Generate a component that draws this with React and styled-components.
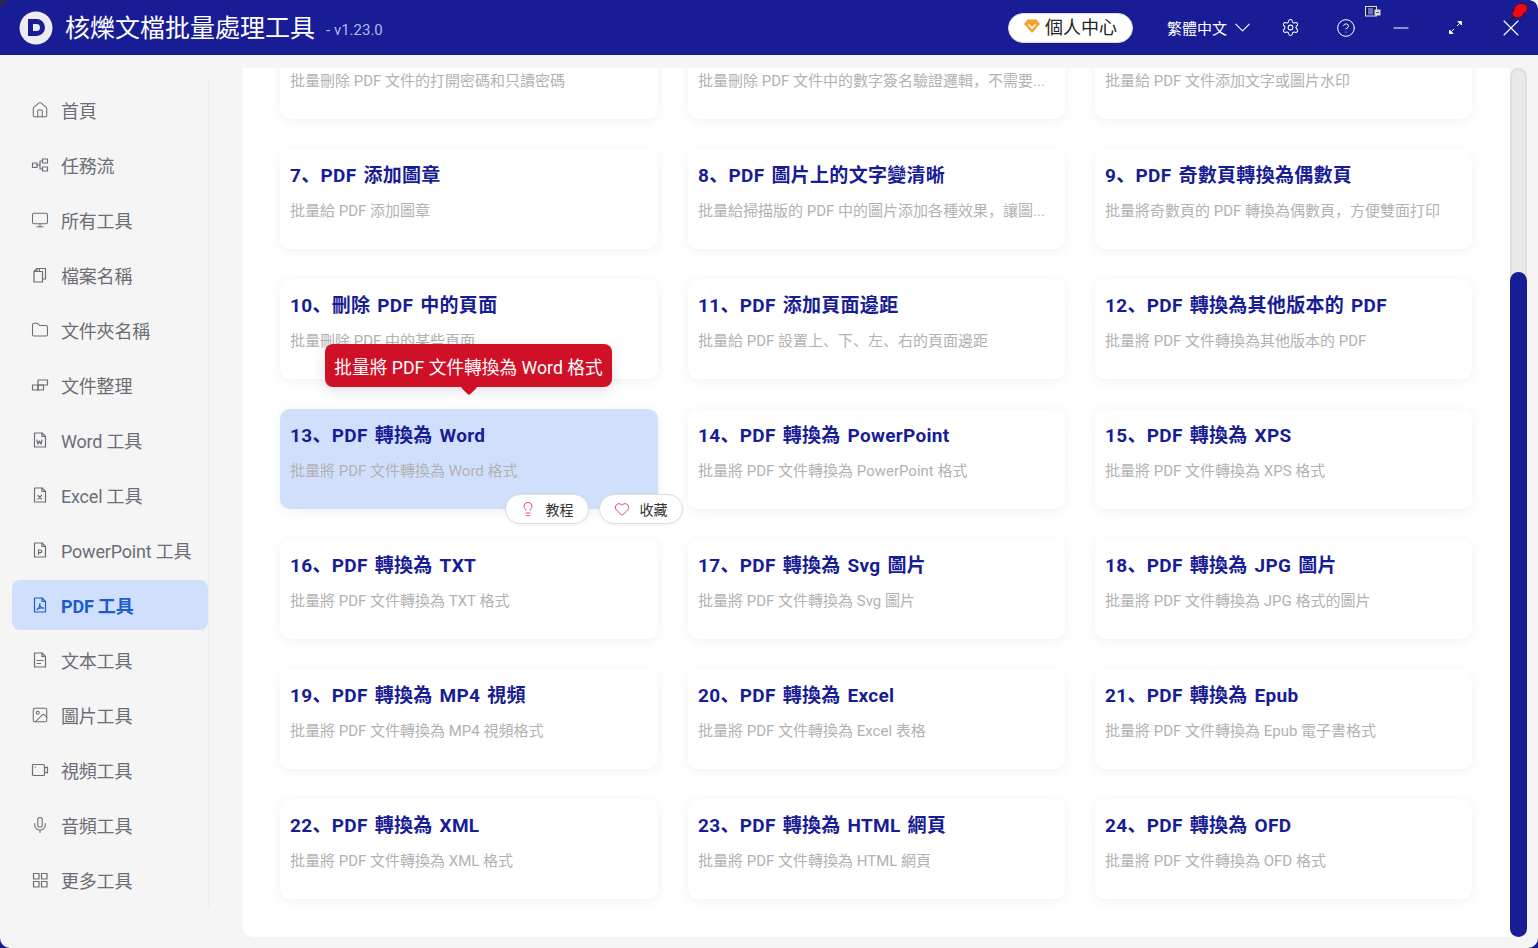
import React from "react";
import styled, { createGlobalStyle } from "styled-components";
import {
  Home, Monitor, Folder, Mic, Image, Settings, CircleHelp, ChevronDown, Minus, X, Heart, Lightbulb,
} from "lucide-react";

const NAVY = "#181c95";
const FONT = `Roboto, "Noto Sans CJK SC", "Noto Sans", sans-serif`;

const GlobalStyle = createGlobalStyle`
  html, body { margin: 0; height: 100%; background: ${NAVY}; }
  body { font-family: ${FONT}; overflow: hidden; }
  #root { height: 948px; }
  * { box-sizing: border-box; }
`;

const Window = styled.div`
  width: 1538px;
  height: 948px;
  display: flex;
  flex-direction: column;
`;

const TitleBar = styled.header`
  position: relative;
  flex: 0 0 55px;
  display: flex;
  align-items: center;
  padding-left: 19px;
  color: #fff;
  background: ${NAVY};
  &::before, &::after {
    content: "";
    position: absolute;
    top: 0;
    width: 9px;
    height: 9px;
  }
  &::before { left: 0; background: radial-gradient(circle at 100% 100%, transparent 8.5px, #2a2a3a 9px); }
  &::after { right: 0; background: radial-gradient(circle at 0 100%, transparent 8.5px, #f4f4f4 9px); }
`;

const Logo = styled.svg`
  width: 34px;
  height: 34px;
  flex: none;
`;

const AppName = styled.h1`
  margin: 2px 0 0 12px;
  font-size: 25px;
  font-weight: 400;
  line-height: 34px;
  white-space: nowrap;
`;

const Version = styled.span`
  margin: 4px 0 0 11px;
  font-size: 15px;
  color: #a9bde6;
`;

const TitleRight = styled.div`
  margin-left: auto;
  display: flex;
  align-items: center;
  height: 100%;
`;

const ProfileButton = styled.button`
  width: 125px;
  height: 30px;
  padding: 0 0 3px;
  margin-right: 33px;
  display: flex;
  align-items: center;
  justify-content: center;
  gap: 5px;
  border: 1px solid #d8d8d8;
  border-radius: 15px;
  background: #fff;
  color: #222;
  font-family: ${FONT};
  font-size: 18px;
`;

const LangPicker = styled.div`
  display: flex;
  align-items: center;
  gap: 2px;
  width: 97px;
  padding-left: 1px;
  font-size: 15px;
  color: #fff;
`;

const TitleIcon = styled.span`
  width: 55px;
  height: 55px;
  flex: none;
  display: flex;
  align-items: center;
  justify-content: center;
`;

const TrayGlyph = styled.svg`
  position: absolute;
  left: 1365px;
  top: 6px;
  width: 16px;
  height: 13px;
`;

const PinGlyph = styled.svg`
  position: absolute;
  left: 1508px;
  top: 3px;
  width: 20px;
  height: 20px;
`;

const Body = styled.div`
  flex: 1;
  min-height: 0;
  display: flex;
  background: #f5f5f5;
  border-radius: 0 0 10px 10px;
`;

const Sidebar = styled.nav`
  width: 209px;
  flex: none;
  margin-top: 25px;
  margin-bottom: 40px;
  padding-top: 5px;
  border-right: 1px solid #ececec;
  display: flex;
  flex-direction: column;
  gap: 5px;
  padding-left: 12px;
`;

const NavItem = styled.a`
  height: 50px;
  flex: none;
  display: flex;
  align-items: center;
  gap: 12px;
  padding-left: 19px;
  border-radius: ${p => (p.$active ? "8px" : "0")};
  background: ${p => (p.$active ? "#d0e0fc" : "transparent")};
  color: ${p => (p.$active ? "#1c5ccd" : "#6c6e75")};
  font-size: 18px;
  font-weight: ${p => (p.$active ? 700 : 400)};
  letter-spacing: -0.2px;
  white-space: nowrap;
  svg { flex: none; }
`;

const Content = styled.main`
  flex: 1;
  display: flex;
  padding: 13px 11px 11px 34px;
`;

const Panel = styled.section`
  position: relative;
  width: 1267px;
  height: 869px;
  background: #fff;
  border-radius: 0 0 0 10px;
  overflow: hidden;
`;

const CardGrid = styled.div`
  display: grid;
  grid-template-columns: 378px 377px 377px;
  grid-auto-rows: 100px;
  column-gap: 30px;
  row-gap: 30px;
  margin: -49px 0 0 37px;
`;

const Card = styled.article`
  position: relative;
  padding: 13px 10px 0;
  border-radius: 10px;
  background: ${p => (p.$active ? "#d0e0fc" : "#fff")};
  box-shadow: 0 2px 12px rgba(0, 0, 0, 0.06);
`;

const CardTitle = styled.h3`
  margin: 0;
  min-height: 28px;
  font-size: 19px;
  line-height: 28px;
  font-weight: 700;
  color: ${NAVY};
  letter-spacing: 0.3px;
  word-spacing: 2px;
  white-space: nowrap;
`;

const CardDesc = styled.p`
  margin: 11px 0 0;
  font-size: 15px;
  line-height: 20px;
  color: #b2b2b2;
  white-space: nowrap;
`;

const Tooltip = styled.div`
  position: absolute;
  left: 45px;
  top: -65px;
  width: 287px;
  height: 43px;
  z-index: 3;
  display: flex;
  align-items: center;
  justify-content: center;
  border-radius: 8px;
  background: #cf1027;
  color: #fff;
  font-size: 17.7px;
  font-weight: 400;
  white-space: nowrap;
  box-shadow: 0 4px 14px rgba(0, 0, 0, 0.12);
  &::after {
    content: "";
    position: absolute;
    left: 138px;
    bottom: -6px;
    width: 12px;
    height: 12px;
    background: #cf1027;
    transform: rotate(45deg);
    border-radius: 2px;
  }
`;

const CardActions = styled.div`
  position: absolute;
  left: 225px;
  top: 85px;
  z-index: 2;
  display: flex;
  gap: 10px;
`;

const ActionButton = styled.button`
  width: 84px;
  height: 30px;
  padding: 0 1px 0 0;
  display: flex;
  align-items: center;
  justify-content: center;
  gap: 10px;
  border: 1px solid #dcdcdc;
  border-radius: 15px;
  background: #fff;
  color: #333;
  font-family: ${FONT};
  font-size: 14px;
  box-shadow: 0 1px 4px rgba(0, 0, 0, 0.06);
`;

const ScrollTrack = styled.div`
  position: relative;
  width: 17px;
  height: 869px;
  flex: none;
  border-radius: 9px;
  background: #e9e9e9;
  box-shadow: inset 0 0 0 2px #dfdfdf;
`;

const ScrollThumb = styled.div`
  position: absolute;
  left: 0;
  right: 0;
  top: 204px;
  bottom: 0;
  border-radius: 9px;
  background: ${NAVY};
`;

const Glyph = ({ children, size = 18 }) => (
  <svg width={size} height={size} viewBox="0 0 18 18" fill="none" stroke="currentColor" strokeWidth="1.2" strokeLinejoin="round" strokeLinecap="round">
    {children}
  </svg>
);

const FlowIcon = () => (
  <Glyph>
    <rect x="1.5" y="7" width="4.5" height="4.5" />
    <rect x="11.5" y="3" width="5" height="4" />
    <rect x="11.5" y="11" width="5" height="4" />
    <path d="M6 9h3M9 5v8M9 5h2.5M9 13h2.5" />
  </Glyph>
);

const FilesIcon = () => (
  <Glyph>
    <path d="M3 5.5h8.5V16H3zM3 5.5l3-3h8.5V13h-3" />
    <path d="M6 2.5V5.500M8.500 2.500V5.500" />
  </Glyph>
);

const OrganizeIcon = () => (
  <Glyph>
    <rect x="1.500" y="9" width="5.500" height="5" />
    <rect x="7" y="9" width="5.500" height="5" />
    <rect x="7" y="4" width="9.500" height="5" />
  </Glyph>
);

// page outline shared by the Word / Excel / PDF ... icons
const DocIcon = ({ children }) => (
  <Glyph>
    <path d="M3.500 2h7.500l3.500 3.500V16h-11z" />
    <path d="M11 2v3.500h3.500" />
    {children}
  </Glyph>
);

const VideoIcon = () => (
  <Glyph>
    <rect x="1.500" y="3.500" width="12" height="11" rx="1" />
    <path d="M13.500 7l3-1v6l-3-1" />
    <path d="M4 6h.5" />
  </Glyph>
);

const GridIcon = () => (
  <Glyph>
    <rect x="2.500" y="2.500" width="5.500" height="5.500" />
    <rect x="10.500" y="2.500" width="5.500" height="5.500" />
    <rect x="2.500" y="10.500" width="5.500" height="5.500" />
    <rect x="10.500" y="10.500" width="5.500" height="5.500" />
  </Glyph>
);

const thin = { size: 18, strokeWidth: 1.4 };

const navItems = [
  { label: "首頁", icon: <Home {...thin} /> },
  { label: "任務流", icon: <FlowIcon /> },
  { label: "所有工具", icon: <Monitor {...thin} /> },
  { label: "檔案名稱", icon: <FilesIcon /> },
  { label: "文件夾名稱", icon: <Folder {...thin} /> },
  { label: "文件整理", icon: <OrganizeIcon /> },
  { label: "Word 工具", icon: <DocIcon><path d="M6 9l1 4 1.500-3 1.500 3 1-4" /></DocIcon> },
  { label: "Excel 工具", icon: <DocIcon><path d="M7 9.500l3.500 3.500M10.500 9.500L7 13" /></DocIcon> },
  { label: "PowerPoint 工具", icon: <DocIcon><path d="M7.500 13.500v-4.500h2a1.300 1.300 0 0 1 0 2.700h-2" /></DocIcon> },
  { label: "PDF 工具", icon: <DocIcon><path d="M9 7.500c0 2.500-1.500 5-3 6M9 10c1 1.500 2 2 3.500 2.200M6 13.500c2-1.500 4-1.800 6.500-1.300" /></DocIcon>, active: true },
  { label: "文本工具", icon: <DocIcon><path d="M6 9.500h6M6 12.500h3.500" /></DocIcon> },
  { label: "圖片工具", icon: <Image {...thin} /> },
  { label: "視頻工具", icon: <VideoIcon /> },
  { label: "音頻工具", icon: <Mic {...thin} /> },
  { label: "更多工具", icon: <GridIcon /> },
];

// the first row is scrolled past, only its descriptions still show
const cards = [
  ["", "批量刪除 PDF 文件的打開密碼和只讀密碼"],
  ["", "批量刪除 PDF 文件中的數字簽名驗證邏輯，不需要..."],
  ["", "批量給 PDF 文件添加文字或圖片水印"],
  ["7、PDF 添加圖章", "批量給 PDF 添加圖章"],
  ["8、PDF 圖片上的文字變清晰", "批量給掃描版的 PDF 中的圖片添加各種效果，讓圖..."],
  ["9、PDF 奇數頁轉換為偶數頁", "批量將奇數頁的 PDF 轉換為偶數頁，方便雙面打印"],
  ["10、刪除 PDF 中的頁面", "批量刪除 PDF 中的某些頁面"],
  ["11、PDF 添加頁面邊距", "批量給 PDF 設置上、下、左、右的頁面邊距"],
  ["12、PDF 轉換為其他版本的 PDF", "批量將 PDF 文件轉換為其他版本的 PDF"],
  ["13、PDF 轉換為 Word", "批量將 PDF 文件轉換為 Word 格式"],
  ["14、PDF 轉換為 PowerPoint", "批量將 PDF 文件轉換為 PowerPoint 格式"],
  ["15、PDF 轉換為 XPS", "批量將 PDF 文件轉換為 XPS 格式"],
  ["16、PDF 轉換為 TXT", "批量將 PDF 文件轉換為 TXT 格式"],
  ["17、PDF 轉換為 Svg 圖片", "批量將 PDF 文件轉換為 Svg 圖片"],
  ["18、PDF 轉換為 JPG 圖片", "批量將 PDF 文件轉換為 JPG 格式的圖片"],
  ["19、PDF 轉換為 MP4 視頻", "批量將 PDF 文件轉換為 MP4 視頻格式"],
  ["20、PDF 轉換為 Excel", "批量將 PDF 文件轉換為 Excel 表格"],
  ["21、PDF 轉換為 Epub", "批量將 PDF 文件轉換為 Epub 電子書格式"],
  ["22、PDF 轉換為 XML", "批量將 PDF 文件轉換為 XML 格式"],
  ["23、PDF 轉換為 HTML 網頁", "批量將 PDF 文件轉換為 HTML 網頁"],
  ["24、PDF 轉換為 OFD", "批量將 PDF 文件轉換為 OFD 格式"],
];

export default function App() {
  return (
    <Window>
      <GlobalStyle />
      <TitleBar>
        <Logo viewBox="0 0 34 34">
          <circle cx="17" cy="17" r="16.500" fill="#ececf2" />
          <path d="M9 8h8.500a8.500 8.500 0 0 1 0 17H9z" fill={NAVY} />
          <path d="M14 13h3.500a3.500 3.500 0 0 1 0 7H14z" fill="#ececf2" />
        </Logo>
        <AppName>核爍文檔批量處理工具</AppName>
        <Version>- v1.23.0</Version>
        <TitleRight>
          <ProfileButton>
            <svg width="16" height="14" viewBox="0 0 16 14">
              <path d="M3.500 0.500h9L16 5l-8 9L0 5z" fill="#f4a32a" />
              <path d="M4.500 5.500L8 9l3.500-3.500" fill="none" stroke="#fff" strokeWidth="1.600" />
            </svg>
            個人中心
          </ProfileButton>
          <LangPicker>繁體中文<ChevronDown size={27} strokeWidth={1} /></LangPicker>
          <TitleIcon><Settings size={19} strokeWidth={1.3} /></TitleIcon>
          <TitleIcon><CircleHelp size={20} strokeWidth={1.2} /></TitleIcon>
          <TitleIcon><Minus size={24} strokeWidth={1.1} /></TitleIcon>
          <TitleIcon>
            <svg width="15" height="15" viewBox="0 0 15 15" fill="#fff" stroke="#fff" strokeWidth="1">
              <path d="M10 1.500h3.500V5zM5 13.500H1.500V10zM11.500 3.500L9 6M3.500 11.500L6 9" />
            </svg>
          </TitleIcon>
          <TitleIcon><X size={28} strokeWidth={1} /></TitleIcon>
        </TitleRight>
        <TrayGlyph viewBox="0 0 16 13">
          <rect x="0.500" y="0.500" width="11" height="9.500" fill="#181c60" stroke="#e2e2e2" />
          <rect x="3" y="2" width="5" height="6.500" fill="#6a6ec0" />
          <rect x="9.500" y="3.500" width="6" height="6" fill="#dcdcdc" />
          <rect x="11" y="6" width="3" height="1" fill="#555" />
        </TrayGlyph>
        <PinGlyph viewBox="0 0 20 20">
          <path d="M1 19l5-6" stroke="#222" strokeWidth="1.600" />
          <path d="M4 11c0-2 1-3 2-3.500C6 5 7 2.500 9 2c1.500-2 6.500-2.500 9.500 0.500 2 3 .5 7-3 8-.5 2.500-2.500 4.500-5.500 4.300C7 14.500 4.500 13.500 4 11z" fill="#f00812" stroke="#4a0a0a" strokeWidth="0.800" />
        </PinGlyph>
      </TitleBar>
      <Body>
        <Sidebar>
          {navItems.map(item => (
            <NavItem key={item.label} $active={item.active}>
              {item.icon}
              {item.label}
            </NavItem>
          ))}
        </Sidebar>
        <Content>
          <Panel>
            <CardGrid>
              {cards.map(([title, desc]) => {
                const active = title.startsWith("13、");
                return (
                  <Card key={desc} $active={active}>
                    <CardTitle>{title}</CardTitle>
                    <CardDesc>{desc}</CardDesc>
                    {active && (
                      <>
                        <Tooltip>批量將 PDF 文件轉換為 Word 格式</Tooltip>
                        <CardActions>
                          <ActionButton>
                            <Lightbulb size={16} strokeWidth={1.3} color="#d4278a" />
                            教程
                          </ActionButton>
                          <ActionButton>
                            <Heart size={16} strokeWidth={1.3} color="#d4278a" />
                            收藏
                          </ActionButton>
                        </CardActions>
                      </>
                    )}
                  </Card>
                );
              })}
            </CardGrid>
          </Panel>
          <ScrollTrack><ScrollThumb /></ScrollTrack>
        </Content>
      </Body>
    </Window>
  );
}
